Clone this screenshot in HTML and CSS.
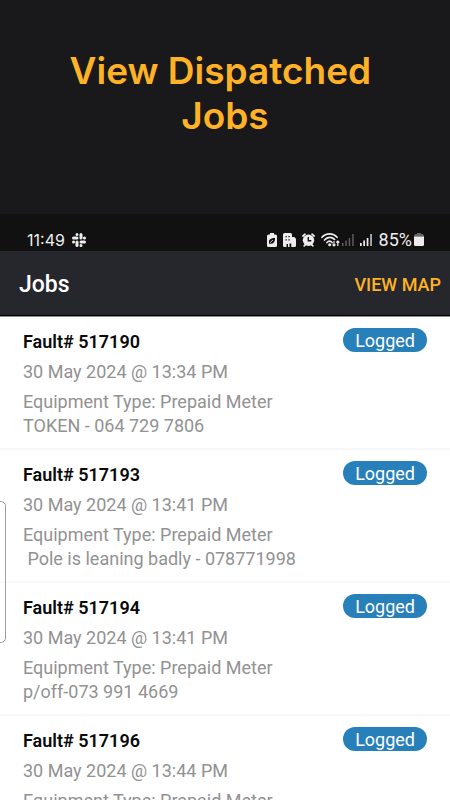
FILE: index.html
```html
<!DOCTYPE html>
<html lang="en">
<head>
<meta charset="utf-8">
<meta name="viewport" content="width=device-width, initial-scale=1">
<title>View Dispatched Jobs</title>
<link rel="stylesheet" href="styles.css">
</head>
<body>
<header class="promo">
  <h1 class="promo-title">View Dispatched&nbsp;<br>Jobs</h1>
</header>
<main class="screen">
  <div class="status">
    <span class="clock">11:49</span>
    <svg class="slack" width="14" height="14" viewBox="0 0 14 14" fill="none" stroke="#ededed" stroke-width="3" stroke-linecap="round">
      <path d="M5 1.500v.1M5 5H1.500M12.500 5h-.1M9 5V1.500M9 12.500v-.1M9 9h3.500M1.500 9h.1M5 9v3.500"/>
    </svg>
    <div class="status-icons">
      <svg width="10" height="14" viewBox="0 0 10 14">
        <path fill="#ededed" d="M3 0h4v1.500h1.500Q10 1.500 10 3v9.500Q10 14 8.500 14h-7Q0 14 0 12.500V3q0-1.500 1.500-1.500H3z"/>
        <path fill="#111" d="M2 9.500C1.500 6.500 4 5 8 5c.2 4-2 6.500-4.700 5.400L2.500 11.500z"/>
        <path stroke="#ededed" stroke-width=".8" d="M3 9.700 6 7"/>
      </svg>
      <svg width="13" height="14" viewBox="0 0 13 14">
        <path fill="#ededed" d="M1.500 0h6Q9 0 9 1.500V4h2.500L13 6v6.500q0 1.500-1.500 1.500H8.300v-3.500H6.500V14H5v-3H3.500v3h-2Q0 14 0 12.500v-11Q0 0 1.500 0z"/>
        <path fill="#111" d="M2.500 3h1.300v1.300H2.500zM5.400 3h1.300v1.300H5.400zM2.500 6.200h1.300v1.300H2.500zM5.400 6.200h1.300v1.300H5.400z"/>
      </svg>
      <svg width="13" height="14" viewBox="0 0 13 14">
        <path fill="none" stroke="#ededed" stroke-width="1.700" stroke-linecap="round" d="M.9 3 3 1.200M12.100 3 10 1.200M2.200 12.800l1-1M10.800 12.800l-1-1"/>
        <circle cx="6.500" cy="7.300" r="5.700" fill="#ededed"/>
        <path fill="none" stroke="#111" stroke-width="1.400" d="M6.300 4v3.700h3"/>
      </svg>
      <svg class="wifi" width="19" height="14" viewBox="0 0 19 14">
        <path fill="none" stroke="#ededed" stroke-width="1.700" stroke-linecap="round" d="M1 4.300C5-.2 12-.2 16 4.300M3.500 7c3-3.400 7.200-3.300 10-.7M6 9.500c1.600-1.800 3.500-1.800 5 0"/>
        <circle cx="8.700" cy="11.800" r="1.500" fill="#ededed"/>
        <path fill="none" stroke="#ededed" stroke-width="1.200" d="M13 8v5M11.500 11.500 13 13l1.500-1.500M16.800 13V8M15.300 9.500 16.800 8l1.500 1.500"/>
      </svg>
      <svg width="12" height="12" viewBox="0 0 12 12">
        <path fill="#5d5d5d" d="M0 9h1.500v3H0zM3.300 6.500h1.500V12H3.300zM6.700 4h1.500v8H6.700zM10.200 0h1.500v12h-1.500z"/>
      </svg>
      <svg width="12" height="12" viewBox="0 0 12 12">
        <path fill="#ededed" d="M0 9h1.700v3H0zM3.300 6.500H5V12H3.300zM6.700 4h1.700v8H6.700z"/>
        <path fill="#bbb" d="M10.200 0h1.700v12h-1.700z"/>
      </svg>
      <span class="percent">85%</span>
      <svg width="10" height="13" viewBox="0 0 10 13">
        <path fill="#666" d="M3 0h4v1h1.500Q10 1 10 3.500H0Q0 1 1.500 1H3z"/>
        <path fill="#ededed" d="M0 3.500h10v8q0 1.500-1.500 1.500h-7Q0 13 0 11.500z"/>
      </svg>
    </div>
  </div>
  <nav class="bar">
    <h2 class="bar-title">Jobs</h2>
    <button class="map" type="button">VIEW MAP</button>
  </nav>
  <div class="list-wrap">
    <ul class="jobs">
      <li class="job">
        <div class="job-head"><h3 class="fault">Fault# 517190</h3><span class="badge">Logged</span></div>
        <p class="date">30 May 2024 @ 13:34 PM</p>
        <p class="info">Equipment Type: Prepaid Meter<br>TOKEN - 064 729 7806</p>
      </li>
      <li class="job">
        <div class="job-head"><h3 class="fault">Fault# 517193</h3><span class="badge">Logged</span></div>
        <p class="date">30 May 2024 @ 13:41 PM</p>
        <p class="info">Equipment Type: Prepaid Meter<br>&nbsp;Pole is leaning badly - 078771998</p>
      </li>
      <li class="job">
        <div class="job-head"><h3 class="fault">Fault# 517194</h3><span class="badge">Logged</span></div>
        <p class="date">30 May 2024 @ 13:41 PM</p>
        <p class="info">Equipment Type: Prepaid Meter<br>p/off-073 991 4669</p>
      </li>
      <li class="job">
        <div class="job-head"><h3 class="fault">Fault# 517196</h3><span class="badge">Logged</span></div>
        <p class="date">30 May 2024 @ 13:44 PM</p>
        <p class="info">Equipment Type: Prepaid Meter</p>
      </li>
    </ul>
    <div class="edge-handle"></div>
  </div>
</main>
</body>
</html>
```
FILE: styles.css
```css
* { box-sizing: border-box; }

body {
  margin: 0;
  height: 100vh;
  overflow: hidden;
  background: #19191b;
  font-family: Roboto, "Liberation Sans", sans-serif;
}

h1, h2, h3, p, ul { margin: 0; padding: 0; }

.promo {
  padding: 48px 16px 76px;
  text-align: center;
}

.promo-title {
  font-family: Inter, "Liberation Sans", sans-serif;
  font-size: 37px;
  line-height: 45px;
  font-weight: 600;
  color: #ffb225;
}

.screen { background: #fff; }

.status {
  display: flex;
  align-items: center;
  padding: 14px 26px 0 27px;
  height: 37px;
  background: #111;
  color: #ededed;
  line-height: 20px;
}

.clock {
  font-family: Inter, "Liberation Sans", sans-serif;
  font-size: 16px;
}

.slack { margin-left: 7px; }

.status-icons {
  display: flex;
  align-items: center;
  gap: 6px;
  margin-left: auto;
}

.wifi { margin-right: -4px; }

.percent {
  margin: 0 -4px 0 1px;
  font-size: 18px;
}

.bar {
  display: flex;
  align-items: center;
  justify-content: space-between;
  height: 65px;
  padding: 3px 9px 0 19px;
  background: #26272c;
  border-bottom: 1px solid #000;
}

.bar-title {
  color: #fff;
  font-size: 23px;
  line-height: 28px;
  font-weight: 500;
}

.map {
  padding: 0;
  border: 0;
  background: none;
  color: #ffb225;
  font-family: inherit;
  font-size: 18px;
  line-height: 24px;
  font-weight: 500;
}

.list-wrap {
  position: relative;
  border-top: 1px solid #909090;
}

.jobs { list-style: none; }

.job {
  padding: 11px 23px 10px;
  border-bottom: 2px solid #f8f8f8;
}

.job-head {
  display: flex;
  justify-content: space-between;
  align-items: flex-start;
}

.fault {
  padding-top: 2px;
  color: #0a0a0a;
  font-size: 18px;
  line-height: 24px;
  font-weight: 600;
}

.badge {
  padding: 2px 12px 0;
  border-radius: 12px;
  background: #2880ba;
  color: #fff;
  font-size: 18px;
  line-height: 22px;
}

.date, .info {
  margin-top: 6px;
  color: #929292;
  font-size: 18px;
  line-height: 24px;
}

.edge-handle {
  position: absolute;
  top: 184px;
  left: -6px;
  width: 12px;
  height: 142px;
  border: 1px solid #a0a0a0;
  border-radius: 5px;
}
```
